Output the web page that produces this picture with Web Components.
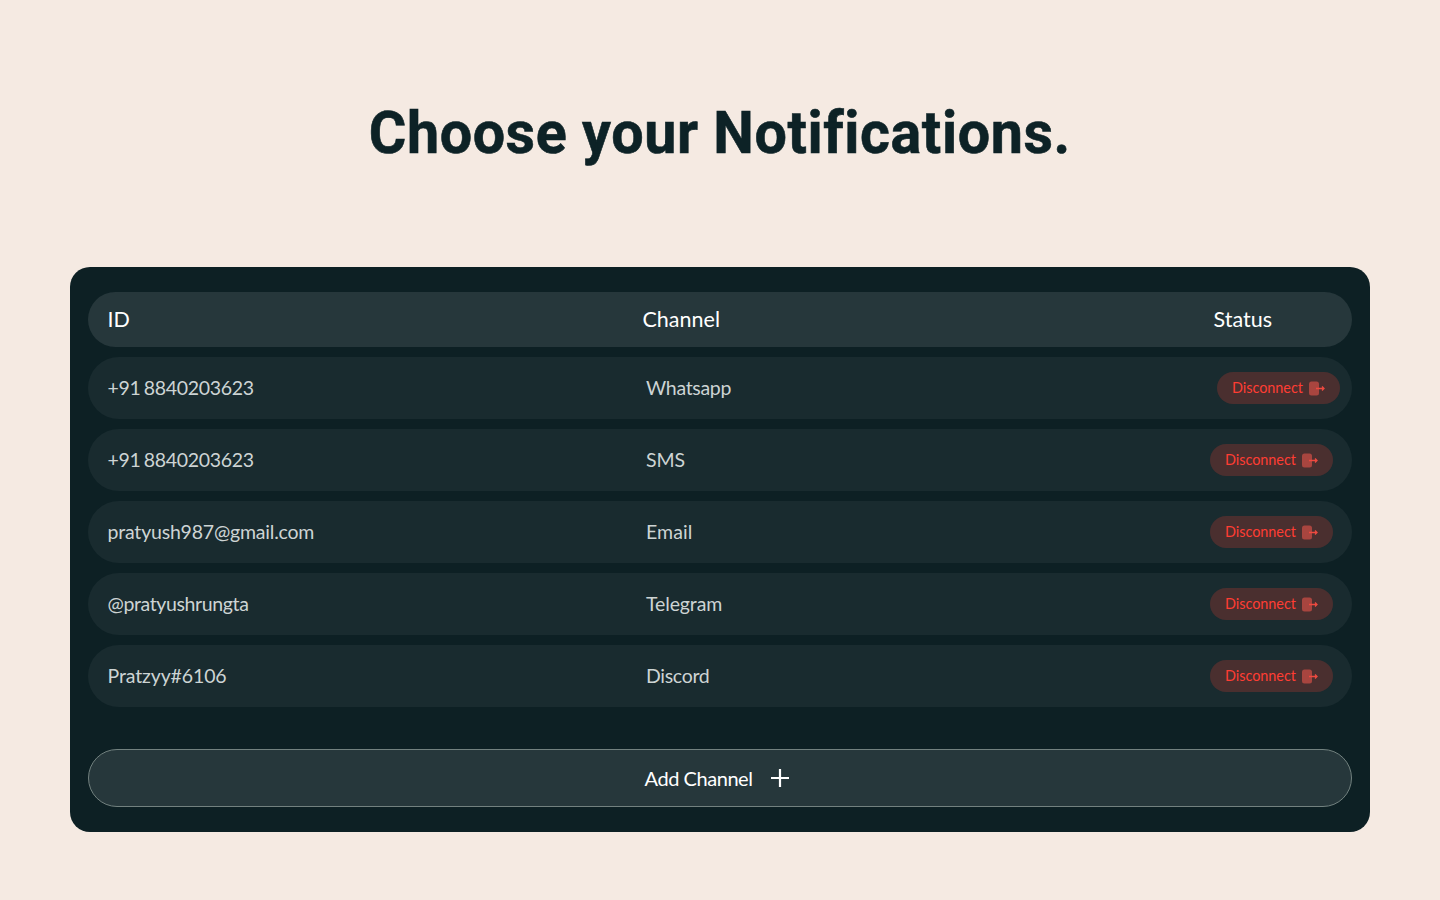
<!DOCTYPE html>
<html><head><meta charset="utf-8"><style>
html,body{margin:0;height:900px;background:#f5eae2;overflow:hidden}
</style></head><body>
<template id="page-t"><style>
:host{display:flex;flex-direction:column;align-items:center;height:900px;box-sizing:border-box;padding-top:98px}
h1{margin:0;font:700 60px/70px Roboto,"Liberation Sans",sans-serif;color:#0d2226;letter-spacing:.6px;height:169px;transform:scaleX(.957);-webkit-text-stroke:.6px #0d2226}
.card{width:1300px;height:565px;box-sizing:border-box;background:#0d2024;border-radius:20px;padding:25px 18px;display:flex;flex-direction:column}
.rows{display:flex;flex-direction:column;gap:10px;flex:1}
</style><h1>Choose your Notifications.</h1><div class="card"><div class="rows"><slot></slot></div><slot name="foot"></slot></div></template>
<template id="row-t"><style>
:host{display:grid;grid-template-columns:538.5px 1fr auto;align-items:center;height:62px;box-sizing:border-box;padding:0 19px 2px 19.5px;border-radius:31px;background:#192b2f;font:400 19.5px "Lato",sans-serif;letter-spacing:-.12px;color:#cdd4d4}
:host([head]){grid-template-columns:535px 1fr auto;height:55px;background:#26373b;color:#fff;font-size:21.5px;letter-spacing:0;border-radius:28px}
.s{display:flex;justify-content:flex-end}
</style><div><slot name="id"></slot></div><div><slot name="ch"></slot></div><div class="s"><slot name="st"></slot></div></template>
<template id="btn-t"><style>
:host{display:inline-flex;align-items:center;gap:6px;height:32px;box-sizing:border-box;padding:0 15px 2px;border-radius:17px;background:#4a2f2f;color:#ff3d33;font:400 14.4px "Lato",sans-serif;letter-spacing:0;position:relative;top:1px}
:host([shift]){left:7px}
svg{display:block;margin-top:2px}
</style><slot></slot><svg width="16" height="15" viewBox="0 0 16 15"><rect x="0" y="0.500" width="10" height="14" rx="2.500" fill="#a8453f"/><path d="M7 7.500h8M13 5.500l2 2-2 2" stroke="#ee4a40" stroke-width="1.300" fill="none"/></svg></template>
<template id="add-t"><style>
:host{display:flex;align-items:center;justify-content:center;gap:18px;height:58px;box-sizing:border-box;padding:0 5px 1px 0;border:1px solid #72817f;border-radius:30px;background:#26373b;color:#fff;font:400 20px "Lato",sans-serif;letter-spacing:-.45px}
svg{display:block;margin-top:1px}
</style><slot></slot><svg width="20" height="20" viewBox="0 0 20 20"><path d="M10 1v18M1 10h18" stroke="#fff" stroke-width="2.200"/></svg></template>
<n-page>
<n-row head><span slot="id">ID</span><span slot="ch">Channel</span><span slot="st" style="padding-right:61px">Status</span></n-row>
<n-row><span slot="id" style="word-spacing:-1.5px;letter-spacing:-.3px">+91 8840203623</span><span slot="ch" style="letter-spacing:-.3px">Whatsapp</span><n-btn slot="st" shift>Disconnect</n-btn></n-row>
<n-row><span slot="id" style="word-spacing:-1.5px;letter-spacing:-.3px">+91 8840203623</span><span slot="ch">SMS</span><n-btn slot="st">Disconnect</n-btn></n-row>
<n-row><span slot="id" style="letter-spacing:-.2px">pratyush987@gmail.com</span><span slot="ch" style="letter-spacing:.1px">Email</span><n-btn slot="st">Disconnect</n-btn></n-row>
<n-row><span slot="id" style="letter-spacing:-.38px">@pratyushrungta</span><span slot="ch">Telegram</span><n-btn slot="st">Disconnect</n-btn></n-row>
<n-row><span slot="id">Pratzyy#6106</span><span slot="ch" style="letter-spacing:-.3px">Discord</span><n-btn slot="st">Disconnect</n-btn></n-row>
<n-add slot="foot">Add Channel</n-add>
</n-page>
<script>
for(const [n,t] of [['n-page','page-t'],['n-row','row-t'],['n-btn','btn-t'],['n-add','add-t']]){
customElements.define(n,class extends HTMLElement{constructor(){super();this.attachShadow({mode:'open'}).appendChild(document.getElementById(t).content.cloneNode(true))}})}
</script></body></html>
